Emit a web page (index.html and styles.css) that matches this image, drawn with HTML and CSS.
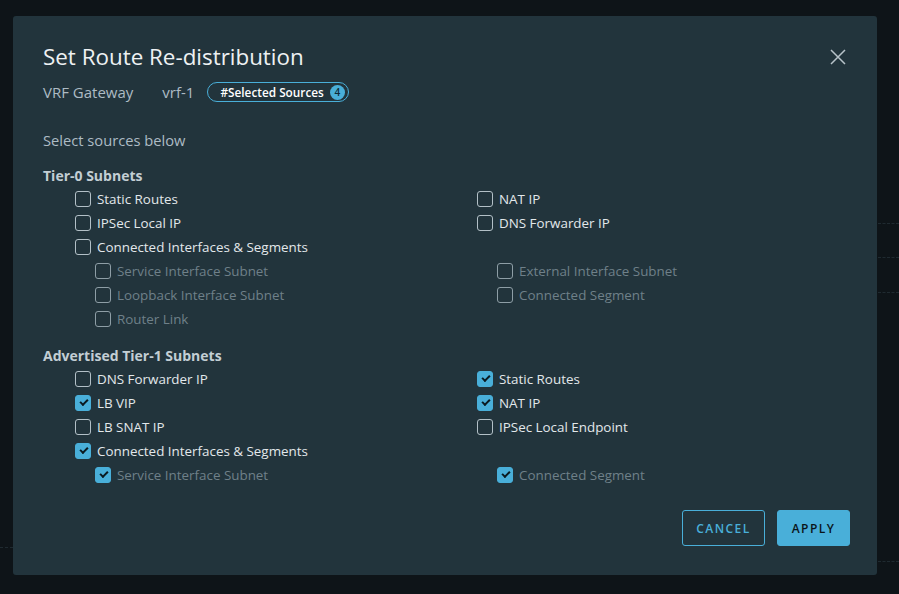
FILE: index.html
```html
<!DOCTYPE html>
<html>
<head>
<meta charset="utf-8">
<link rel="stylesheet" href="styles.css">
</head>
<body>
<div class="page">
  <div class="bg-line l1"></div>
  <div class="bg-line l2"></div>
  <div class="bg-line l3"></div>
  <div class="bg-line l4"></div>
  <div class="bg-line l5"></div>
</div>
<div class="modal">
  <div class="header">
    <h1 class="title">Set Route Re-distribution</h1>
    <button class="close" aria-label="Close">
      <svg width="16" height="16" viewBox="0 0 16 16"><path d="M1 1 L15 15 M15 1 L1 15" stroke="#b7c3c9" stroke-width="1.5" fill="none"/></svg>
    </button>
  </div>
  <div class="meta">
    <span class="meta-label">VRF Gateway</span>
    <span class="meta-value">vrf-1</span>
    <span class="pill">#Selected Sources <span class="badge">4</span></span>
  </div>
  <div class="intro">Select sources below</div>

  <div class="section">
    <div class="heading">Tier-0 Subnets</div>
    <div class="grid">
      <label class="item"><span class="box"></span>Static Routes</label>
      <label class="item"><span class="box"></span>NAT IP</label>
      <label class="item"><span class="box"></span>IPSec Local IP</label>
      <label class="item"><span class="box"></span>DNS Forwarder IP</label>
      <label class="item"><span class="box"></span>Connected Interfaces &amp; Segments</label>
      <div class="item empty"></div>
      <label class="item sub"><span class="box"></span>Service Interface Subnet</label>
      <label class="item sub"><span class="box"></span>External Interface Subnet</label>
      <label class="item sub"><span class="box"></span>Loopback Interface Subnet</label>
      <label class="item sub"><span class="box"></span>Connected Segment</label>
      <label class="item sub"><span class="box"></span>Router Link</label>
      <div class="item empty"></div>
    </div>
  </div>

  <div class="section second">
    <div class="heading">Advertised Tier-1 Subnets</div>
    <div class="grid">
      <label class="item"><span class="box"></span>DNS Forwarder IP</label>
      <label class="item"><span class="box checked"></span>Static Routes</label>
      <label class="item"><span class="box checked"></span>LB VIP</label>
      <label class="item"><span class="box checked"></span>NAT IP</label>
      <label class="item"><span class="box"></span>LB SNAT IP</label>
      <label class="item"><span class="box"></span>IPSec Local Endpoint</label>
      <label class="item"><span class="box checked"></span>Connected Interfaces &amp; Segments</label>
      <div class="item empty"></div>
      <label class="item sub"><span class="box checked"></span>Service Interface Subnet</label>
      <label class="item sub"><span class="box checked"></span>Connected Segment</label>
    </div>
  </div>

  <div class="footer">
    <button class="btn btn-outline">CANCEL</button>
    <button class="btn btn-primary">APPLY</button>
  </div>
</div>
</body>
</html>
```

FILE: styles.css
```css
html, body {
  margin: 0;
  padding: 0;
  width: 899px;
  height: 594px;
  overflow: hidden;
  background: #0e1418;
  font-family: "Open Sans", "DejaVu Sans", sans-serif;
}

.page {
  position: relative;
  width: 899px;
  height: 594px;
  background: #0e1418;
}

.bg-line {
  position: absolute;
  height: 0;
  border-top: 1px dashed #1f2a30;
}
.l1 { left: 878px; right: 0; top: 223px; }
.l2 { left: 878px; right: 0; top: 257px; }
.l3 { left: 878px; right: 0; top: 292px; }
.l4 { left: 878px; right: 0; top: 561px; }
.l5 { left: 0; width: 13px; top: 547px; }

.modal {
  position: absolute;
  left: 13px;
  top: 16px;
  width: 864px;
  height: 559px;
  box-sizing: border-box;
  background: #22343c;
  border-radius: 3px;
  padding: 26px 27px 29px 30px;
  display: flex;
  flex-direction: column;
  color: #e3e8eb;
}

.header {
  display: flex;
  justify-content: space-between;
  align-items: center;
  height: 30px;
}

.title {
  margin: 0;
  font-size: 22.4px;
  font-weight: 400;
  color: #eef1f3;
  line-height: 30px;
}

.close {
  background: none;
  border: 0;
  padding: 0;
  margin-right: 4px;
  width: 16px;
  height: 16px;
  display: flex;
}

.meta {
  display: flex;
  align-items: center;
  margin-top: 8px;
  height: 24px;
  font-size: 15px;
  color: #adbbc4;
}

.meta-label { margin-right: 29px; }
.meta-value { margin-right: 13px; }

.pill {
  display: inline-flex;
  align-items: center;
  height: 20px;
  box-sizing: border-box;
  border: 1px solid #49afd9;
  border-radius: 10px;
  padding: 0 3px 0 12px;
  font-size: 11.8px;
  font-weight: 600;
  color: #ffffff;
}

.badge {
  display: inline-flex;
  align-items: center;
  justify-content: center;
  width: 15px;
  height: 15px;
  border-radius: 50%;
  background: #49afd9;
  color: #0f2a36;
  font-size: 10px;
  font-weight: 600;
  margin-left: 6px;
}

.intro {
  margin-top: 24px;
  height: 24px;
  line-height: 24px;
  font-size: 14.7px;
  color: #adbbc4;
}

.section { margin-top: 12px; }
.section.second { margin-top: 13px; }

.heading {
  height: 23px;
  line-height: 23px;
  font-size: 14px;
  font-weight: 700;
  color: #c3ced4;
}

.grid {
  display: grid;
  grid-template-columns: 402px 1fr;
  margin-left: 32px;
}

.item {
  height: 24px;
  display: flex;
  align-items: center;
  font-size: 13.4px;
  color: #e3e8eb;
}

.item.sub {
  padding-left: 20px;
  color: #6f8089;
}

.box {
  width: 16px;
  height: 16px;
  box-sizing: border-box;
  border: 1px solid #b3c0c7;
  border-radius: 3px;
  margin-right: 6px;
  flex: none;
  position: relative;
}

.item.sub .box { border-color: #8e9ea6; }

.box.checked,
.item.sub .box.checked {
  background: #49afd9;
  border-color: #49afd9;
}

.box.checked::after {
  content: "";
  position: absolute;
  left: 4px;
  top: 3px;
  width: 6px;
  height: 3px;
  border-left: 2px solid #0b1a20;
  border-bottom: 2px solid #0b1a20;
  transform: rotate(-45deg);
}

.footer {
  margin-top: auto;
  display: flex;
  justify-content: flex-end;
  gap: 12px;
}

.btn {
  height: 36px;
  box-sizing: border-box;
  border-radius: 3px;
  font-family: "Open Sans", "DejaVu Sans", sans-serif;
  font-size: 12px;
  font-weight: 600;
  letter-spacing: 0.12em;
  padding: 0 12px;
}

.btn-outline {
  width: 83px;
  background: transparent;
  border: 1px solid #49afd9;
  color: #49afd9;
}

.btn-primary {
  width: 73px;
  background: #49afd9;
  border: 1px solid #49afd9;
  color: #0b1419;
}
```
